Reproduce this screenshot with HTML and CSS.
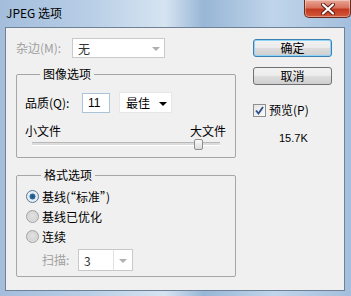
FILE: index.html
```html
<!DOCTYPE html>
<html lang="zh">
  <head>
    <meta charset="UTF-8" />
    <title>JPEG 选项</title>
    <link rel="stylesheet" href="styles.css">
  </head>
  <body>
    <div class="window">
      <div class="titlebar">
        <span class="title">JPEG 选项</span>
        <span class="close">
          <svg width="16" height="12" viewBox="0 0 16 12">
            <path d="M3 1.5 L13 10.5 M13 1.5 L3 10.5" stroke="#5a1a10" stroke-width="4" stroke-linecap="round"/>
            <path d="M3 1.5 L13 10.5 M13 1.5 L3 10.5" stroke="#ffffff" stroke-width="2.2" stroke-linecap="round"/>
          </svg>
        </span>
      </div>
      <div class="client">
        <div class="left">
          <div class="matte-row">
            <span class="label off">杂边(M):</span>
            <div class="combo off matte"><span>无</span><span class="arrow"></span></div>
          </div>

          <fieldset class="group image-group">
            <legend>图像选项</legend>
            <div class="quality-row">
              <span class="label q-label">品质(Q):</span>
              <span class="numbox">11</span>
              <div class="dropdown"><span>最佳</span><span class="arrow dark"></span></div>
            </div>
            <div class="size-labels"><span>小文件</span><span>大文件</span></div>
            <div class="slider">
              <div class="track"></div>
              <div class="thumb"></div>
            </div>
          </fieldset>

          <fieldset class="group format-group">
            <legend>格式选项</legend>
            <div class="radio-row"><span class="radio on"></span><span>基线(“标准”)</span></div>
            <div class="radio-row"><span class="radio"></span><span>基线已优化</span></div>
            <div class="radio-row"><span class="radio"></span><span>连续</span></div>
            <div class="scan-row">
              <span class="label off scan-label">扫描:</span>
              <div class="combo off scan"><span>3</span><span class="arrow split"></span></div>
            </div>
          </fieldset>
        </div>

        <div class="right">
          <button class="btn default">确定</button>
          <button class="btn">取消</button>
          <div class="check-row">
            <span class="check">
              <svg width="9" height="9" viewBox="0 0 9 9">
                <path d="M1 4.5 L3.5 7.5 L8 1" fill="none" stroke="#2a4d8f" stroke-width="1.8"/>
              </svg>
            </span>
            <span>预览(P)</span>
          </div>
          <div class="filesize">15.7K</div>
        </div>
      </div>
    </div>
  </body>
</html>
```

FILE: styles.css
```css
body {
  margin: 0;
  padding: 0;
  font-family: "Noto Sans CJK SC", "DejaVu Sans", sans-serif;
  font-size: 12px;
  color: #000;
}

.window {
  width: 351px;
  height: 296px;
  box-sizing: border-box;
  padding: 0 6px 5px 5px;
  background: linear-gradient(90deg, #a3bddb 0%, #b8cee6 25%, #d6e4f1 47%, #98b6d6 58%, #c0d5ea 78%, #a3bfdd 100%);
  display: flex;
  flex-direction: column;
  overflow: hidden;
}

/* title bar */
.titlebar {
  height: 27px;
  display: flex;
  align-items: flex-start;
  justify-content: space-between;
}
.title {
  margin-top: 4px;
  margin-left: 1px;
  line-height: 17px;
  font-size: 12px;
  color: #000;
}
.close {
  width: 47px;
  height: 18px;
  margin-right: -6px;
  box-sizing: border-box;
  border: 1px solid #6b2a1e;
  border-top: none;
  border-radius: 0 0 5px 5px;
  background: linear-gradient(180deg, #e9a797 0%, #d8725d 45%, #c2391f 55%, #d35a3e 100%);
  box-shadow: inset 0 0 0 1px rgba(255, 255, 255, 0.35);
  display: flex;
  align-items: center;
  justify-content: center;
}

/* client area */
.client {
  height: 264px;
  box-sizing: border-box;
  border: 1px solid #6f8197;
  background: #f0f0f0;
  display: flex;
  gap: 17px;
  padding: 10px 0 0 10px;
}
.left {
  width: 220px;
  display: flex;
  flex-direction: column;
}
.right {
  width: 79px;
  display: flex;
  flex-direction: column;
  padding-top: 1px;
}

.label {
  line-height: 14px;
}
.off {
  color: #a0a0a0;
}

.matte-row {
  display: flex;
  align-items: center;
  height: 20px;
}
.matte-row .label {
  width: 56px;
}

.combo {
  height: 20px;
  box-sizing: border-box;
  border: 1px solid #c9c9c9;
  background: #fff;
  display: flex;
  align-items: center;
  justify-content: space-between;
  padding-left: 5px;
  color: #222;
}
.combo.off span:first-child {
  color: #333;
}
.matte {
  width: 93px;
}
.arrow {
  width: 16px;
  height: 100%;
  position: relative;
  box-sizing: border-box;
}
.arrow::after {
  content: "";
  position: absolute;
  left: 4px;
  top: 50%;
  margin-top: -1px;
  border-left: 4px solid transparent;
  border-right: 4px solid transparent;
  border-top: 4px solid #b0b0b0;
}
.arrow.dark::after {
  border-top-color: #000;
}
.arrow.split {
  border-left: 1px solid #e2e2e2;
  width: 19px;
}
.arrow.split::after {
  left: 5px;
}

/* group boxes */
.group {
  margin: 0;
  border: 1px solid #a6a6a6;
  border-radius: 2px;
  min-width: 0;
}
.group legend {
  padding: 0 3px;
  margin-left: 15px;
  line-height: 14px;
}
.image-group {
  margin-top: 9px;
  padding: 11px 9px 7px 8px;
}
.format-group {
  margin-top: 10px;
  padding: 4px 9px 5px 9px;
}

.quality-row {
  display: flex;
  align-items: center;
  height: 21px;
}
.q-label {
  width: 57px;
}
.numbox {
  width: 28px;
  height: 20px;
  box-sizing: border-box;
  border: 1px solid #a9c3dd;
  background: #fff;
  padding-left: 5px;
  line-height: 18px;
  font-family: "Liberation Sans", sans-serif;
  font-size: 12px;
}
.dropdown {
  width: 53px;
  height: 21px;
  margin-left: 9px;
  box-sizing: border-box;
  border: 1px solid #e6e6e6;
  background: #fff;
  display: flex;
  align-items: center;
  justify-content: space-between;
  padding-left: 6px;
}

.size-labels {
  margin-top: 11px;
  display: flex;
  justify-content: space-between;
  line-height: 14px;
}

.slider {
  position: relative;
  height: 12px;
  margin: 0 6px 0 7px;
}
.track {
  position: absolute;
  left: 0;
  right: 0;
  top: 4px;
  height: 2px;
  background: #dcdcdc;
  border-top: 1px solid #b8b8b8;
  border-bottom: 1px solid #fff;
}
.thumb {
  position: absolute;
  left: 162px;
  top: 1px;
  width: 9px;
  height: 11px;
  box-sizing: border-box;
  border: 1px solid #8f8f8f;
  border-radius: 2px;
  background: linear-gradient(180deg, #fafafa, #dcdcdc);
}

.radio-row {
  height: 20px;
  display: flex;
  align-items: center;
  gap: 3px;
}
.radio {
  width: 13px;
  height: 13px;
  box-sizing: border-box;
  border-radius: 50%;
  border: 1px solid #a0a0a0;
  background: radial-gradient(circle at 50% 45%, #e2e2e2 0%, #d6d6d6 55%, #f4f4f4 100%);
}
.radio.on {
  border-color: #5a7796;
  background: radial-gradient(circle at 50% 50%, #1f4f79 0%, #2f6ea0 35%, #dfe9f3 42%, #f6f6f6 100%);
}

.scan-row {
  margin-top: 3px;
  height: 22px;
  display: flex;
  align-items: center;
  padding-left: 16px;
}
.scan-label {
  width: 36px;
}
.scan {
  width: 55px;
  height: 22px;
}

/* buttons */
.btn {
  width: 79px;
  height: 18px;
  box-sizing: border-box;
  margin: 0;
  padding: 0;
  border: 1px solid #707070;
  border-radius: 3px;
  background: linear-gradient(180deg, #f2f2f2 0%, #ebebeb 48%, #dddddd 52%, #cfcfcf 100%);
  font-family: "Noto Sans CJK SC", sans-serif;
  font-size: 12px;
  line-height: 14px;
  color: #000;
}
.btn + .btn {
  margin-top: 10px;
}
.btn.default {
  border-color: #3c7fb1;
  box-shadow: inset 0 0 0 1px #8fd3f5;
}

.check-row {
  margin-top: 18px;
  display: flex;
  align-items: center;
  gap: 3px;
  line-height: 14px;
}
.check {
  width: 13px;
  height: 13px;
  box-sizing: border-box;
  border: 1px solid #8e8f8f;
  background: linear-gradient(135deg, #e4e4e4, #fbfbfb);
  display: flex;
  align-items: center;
  justify-content: center;
}

.filesize {
  margin-top: 15px;
  padding-left: 26px;
  font-family: "Liberation Sans", sans-serif;
  font-size: 11px;
  line-height: 13px;
}
```
